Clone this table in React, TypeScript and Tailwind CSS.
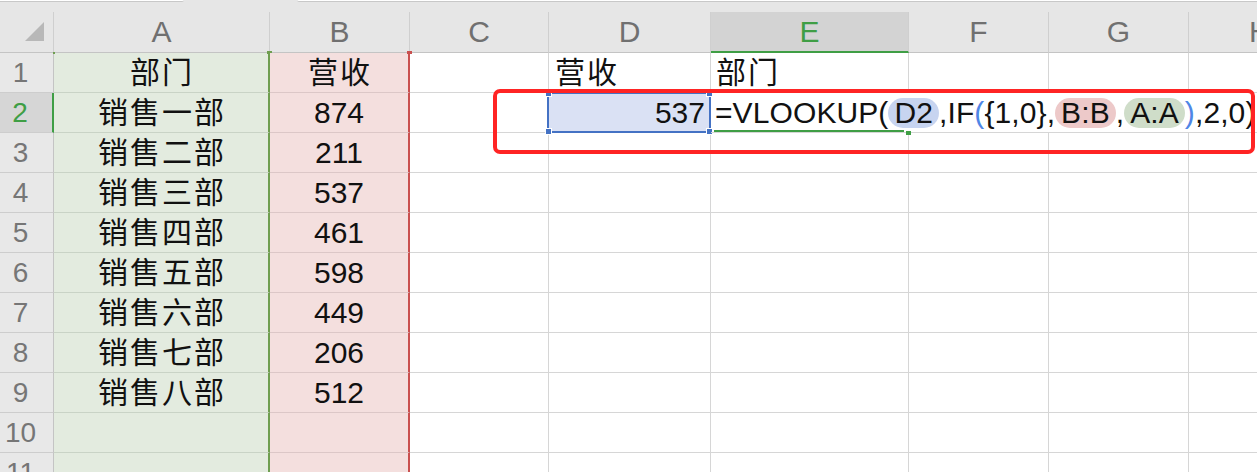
import React from "react";

const colLetters = ["A", "B", "C", "D", "E", "F", "G", "H"];
const colA = ["部门", "销售一部", "销售二部", "销售三部", "销售四部", "销售五部", "销售六部", "销售七部", "销售八部", "", ""];
const colB = ["营收", "874", "211", "537", "461", "598", "449", "206", "512", "", ""];

function Formula() {
  return (
    <div className="flex items-center whitespace-nowrap text-[30px] leading-[30px] tracking-[0.1px] text-[#111]">
      <span>=VLOOKUP(</span>
      <span className="rounded-full bg-[#c7d4f0] px-[6px] leading-[30px]">D2</span>
      <span>,IF</span>
      <span className="text-[#4f86e6]">(</span>
      <span>{"{1,0},"}</span>
      <span className="rounded-full bg-[#edc9c9] px-[6px] leading-[30px]">B:B</span>
      <span>,</span>
      <span className="rounded-full bg-[#cfddc9] px-[6px] leading-[30px]">A:A</span>
      <span className="text-[#4f86e6]">)</span>
      <span>,2,0)</span>
    </div>
  );
}

export default function App() {
  return (
    <div className="relative h-[472px] w-[1257px] overflow-hidden bg-white font-['Liberation_Sans','Noto_Sans_CJK_SC',sans-serif]">
      {/* top strip */}
      <div className="flex h-[2px] bg-[#e6e6e6]">
        <div className="h-[2px] w-[184px] rounded-br-[3px] border-b border-[#c8c8c8] bg-white" />
        <div className="w-[113px]" />
        <div className="h-[2px] flex-1 rounded-bl-[3px] border-b border-[#c8c8c8] bg-white" />
      </div>
      <div className="h-[10px] bg-[#e6e6e6]" />

      {/* column header */}
      <div className="grid h-[41px] grid-cols-[54px_216px_140px_139px_162px_198px_140px_140px_1fr] bg-[#e6e6e6]">
        <div className="relative border-b border-r border-[#c4c4c4] border-r-[#cfcfcf]">
          <svg className="absolute left-[25px] top-[10px]" width="19" height="19" viewBox="0 0 19 19">
            <polygon points="19,0 19,19 0,19" fill="#b8b8b8" />
          </svg>
        </div>
        {colLetters.map((c) =>
          c === "E" ? (
            <div
              key={c}
              className="flex items-center justify-center border-b-2 border-r border-b-[#3f9e45] border-r-[#cfcfcf] bg-[#d3d3d3] text-[30px] leading-none text-[#3f9e45]"
            >
              {c}
            </div>
          ) : (
            <div
              key={c}
              className={`flex items-center justify-center border-b border-b-[#c4c4c4] text-[30px] leading-none text-[#707070] ${
                c === "H" ? "justify-start pl-[60px]" : "border-r border-r-[#cfcfcf]"
              }`}
            >
              {c}
            </div>
          )
        )}
      </div>

      {/* body rows */}
      {colA.map((a, i) => {
        const r = i + 1;
        const active = r === 2;
        return (
          <div
            key={r}
            className="grid h-[40px] grid-cols-[54px_216px_140px_139px_162px_198px_140px_140px_1fr] text-[30px] leading-[30px] text-[#111]"
          >
            {/* row header */}
            <div
              className={`flex items-center justify-center border-b border-b-[#cdcdcd] pr-[12px] text-[28px] leading-[30px] ${
                active
                  ? "border-r-2 border-r-[#3f9e45] bg-[#d6d6d6] text-[#3f9e45]"
                  : "border-r border-r-[#c4c4c4] bg-[#e8e8e8] text-[#767676]"
              }`}
            >
              {r}
            </div>
            {/* A */}
            <div className="relative flex items-center justify-center border-b border-r-2 border-b-[#c9d3c6] border-r-[#6f9e50] bg-[#e3ebdf] pl-[2px] tracking-[2px]">
              {r === 1 && <div className="absolute -right-[4px] -top-[2px] h-[3px] w-[5px] bg-[#6f9e50]" />}
              {r === 1 && <div className="absolute -left-[1px] -top-[1px] h-[2px] w-[2px] bg-[#6f9e50]" />}
              {a}
            </div>
            {/* B */}
            <div className="relative flex items-center justify-center border-b border-r-2 border-b-[#dcc7c7] border-r-[#c9504f] bg-[#f4dfde]">
              {r === 1 && <div className="absolute -right-[4px] -top-[2px] h-[3px] w-[5px] bg-[#c9504f]" />}
              <span className={r === 1 ? "pl-[2px] tracking-[2px]" : ""}>{colB[i]}</span>
            </div>
            {/* C */}
            <div className="border-b border-r border-[#d6d6d6]" />
            {/* D */}
            {r === 1 ? (
              <div className="flex items-center border-b border-r border-[#d6d6d6] pl-[6px] tracking-[2px]">营收</div>
            ) : active ? (
              <div className="relative flex items-center justify-end border-b border-r border-[#d6d6d6] bg-[#dae1f4] pr-[5px]">
                537
                <div className="absolute -bottom-[1px] -left-[2px] -right-[1px] -top-[1px] border-2 border-[#4472c4]">
                  <div className="absolute -left-[4px] -top-[4px] h-[7px] w-[7px] border border-white bg-[#4472c4]" />
                  <div className="absolute -right-[4px] -top-[4px] h-[7px] w-[7px] border border-white bg-[#4472c4]" />
                  <div className="absolute -bottom-[4px] -left-[4px] h-[7px] w-[7px] border border-white bg-[#4472c4]" />
                  <div className="absolute -bottom-[4px] -right-[4px] h-[7px] w-[7px] border border-white bg-[#4472c4]" />
                </div>
              </div>
            ) : (
              <div className="border-b border-r border-[#d6d6d6]" />
            )}
            {/* E */}
            {r === 1 ? (
              <div className="flex items-center border-b border-r border-[#d6d6d6] pl-[5px] tracking-[2px]">部门</div>
            ) : active ? (
              <div className="relative z-10 flex items-center border-b border-[#d6d6d6] pl-[4px]">
                <Formula />
                <div className="absolute bottom-0 left-[3px] right-[5px] h-[2px] bg-[#3f9e45]" />
                <div className="absolute -bottom-[3px] -right-[2px] h-[4px] w-[5px] bg-[#3f9e45]" />
              </div>
            ) : (
              <div className="border-b border-r border-[#d6d6d6]" />
            )}
            {/* F */}
            <div className={`border-b border-[#d6d6d6] ${active ? "" : "border-r"}`} />
            {/* G */}
            <div className={`border-b border-[#d6d6d6] ${active ? "" : "border-r"}`} />
            {/* H */}
            <div className="border-b border-[#d6d6d6]" />
          </div>
        );
      })}

      {/* red annotation box */}
      <div className="absolute left-[493px] top-[89px] z-20 h-[65px] w-[762px] rounded-[7px] border-4 border-[#ff2424]" />
    </div>
  );
}
